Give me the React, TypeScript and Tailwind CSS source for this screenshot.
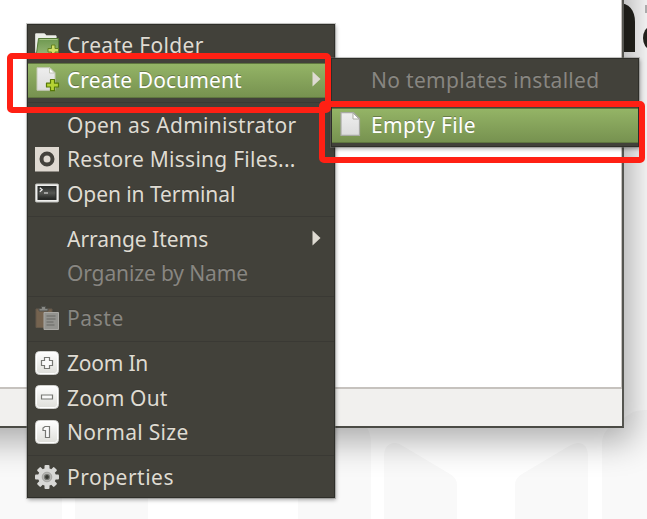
import type { ReactNode } from "react";
import { clsx } from "clsx";

function Icon({ children }: { children: ReactNode }) {
  return (
    <svg viewBox="0 0 24 24" className="-mt-[2px] h-6 w-6 shrink-0 overflow-visible">
      {children}
    </svg>
  );
}

function PlusBadge() {
  return (
    <path
      d="M15.500 12.500h4v3.700h4v3.800h-4v3.700h-4V20h-4v-3.800h4z"
      fill="#b5d334"
      stroke="#577a08"
      strokeWidth="1.2"
      strokeLinejoin="round"
    />
  );
}

function FolderIcon() {
  return (
    <Icon>
      <path d="M.7 19V.9h9l1.800 2h9.700V19z" fill="#f2f2ee" stroke="#c5c6be" />
      <path d="M.5 1v21h2.500V5H21V2.500H11L9.500 .5H.5z" fill="#eceee8" />
      <path d="M3.500 5.500h20v17H1.500v-2z" fill="url(#folder)" stroke="#547936" />
      <path d="M4.500 6.500h18" stroke="#a8c886" />
      <path d="M16.500 12h3.500v3.500h3.500V19H20v3.500h-3.500V19H13v-3.500h3.500z" fill="#d0df65" stroke="#638221" />
    </Icon>
  );
}

function NewDocumentIcon() {
  return (
    <Icon>
      <path d="M2 .7h13l5 5v17.600H2z" fill="url(#paper)" stroke="#c5c9b7" />
      <path d="M14.500 1v5h5z" fill="#fff" stroke="#b8bba9" strokeWidth=".8" />
      <PlusBadge />
    </Icon>
  );
}

function FileIcon() {
  return (
    <Icon>
      <path d="M2 .7h12.500l6 6v16.600H2z" fill="url(#paper)" stroke="#a8aaa4" strokeWidth="1.2" />
      <path d="M14 1v6h6z" fill="#fff" stroke="#aaada3" />
    </Icon>
  );
}

function RestoreIcon() {
  return (
    <Icon>
      <path d="M0 0h24v24.500H0z" fill="#dfd9d1" />
      <circle cx="12" cy="12" r="5.500" fill="none" stroke="#44423c" strokeWidth="4" />
    </Icon>
  );
}

function TerminalIcon() {
  return (
    <Icon>
      <rect x=".5" y="3" width="23" height="18" rx="1" fill="#efefed" stroke="#bbbcb8" />
      <rect x="3" y="5.500" width="18" height="13" fill="url(#screen)" stroke="#292b29" />
      <path d="m4.800 6.800 2.400 2-2.400 2M9 12h4" fill="none" stroke="#eee" strokeWidth="1.2" />
    </Icon>
  );
}

function PasteIcon() {
  return (
    <Icon>
      <path d="M1 3h16v18.500H1z" fill="#75634f" stroke="#65594a" />
      <path d="M4 5V2.500h2.500V.5h4v2H13V5z" fill="#888985" stroke="#50514c" />
      <path d="M9 6.500h14.500v17H9z" fill="#93938f" stroke="#aaa9a5" />
      <path d="M11.500 10h9M11.500 13h9M11.500 16h7M11.500 19h8" stroke="#686965" strokeWidth="1.1" />
    </Icon>
  );
}

function ZoomIcon({ shape }: { shape: string }) {
  return (
    <Icon>
      <rect x=".5" y=".5" width="23" height="23" rx="4" fill="url(#button)" stroke="#d0d0cd" />
      <rect x="1.500" y="1.500" width="21" height="21" rx="3" fill="none" stroke="#fff" />
      <path d={shape} fill="#fafafa" stroke="#777874" strokeWidth="1.2" />
    </Icon>
  );
}

function GearIcon() {
  return (
    <Icon>
      <g fill="#d8d8d6">
        {[0, 45, 90, 135].map((a) => (
          <rect key={a} x="9.500" y="0" width="5" height="24" rx="1" transform={`rotate(${a} 12 12)`} />
        ))}
        <circle cx="12" cy="12" r="9" />
      </g>
      <circle cx="12" cy="12" r="4.800" fill="#b6b6b3" stroke="#a5a5a2" />
      <circle cx="12" cy="12" r="2.500" fill="#373833" stroke="#777874" strokeWidth="1.2" />
    </Icon>
  );
}

type RowProps = {
  label: string;
  tracking: string;
  icon?: ReactNode;
  disabled?: boolean;
  selected?: boolean;
  arrow?: boolean;
};

function Row({ label, tracking, icon, disabled, selected, arrow }: RowProps) {
  return (
    <div
      className={clsx(
        "flex h-[34.5px] shrink-0 items-center whitespace-nowrap pl-[7px] pr-[13px]",
        selected && "border-y border-[#5f763f] bg-linear-to-b from-[#94b466] to-[#779250] text-white",
        !selected && (disabled ? "text-[#888681]" : "text-[#dfdbd2]"),
      )}
    >
      <div className="mr-2 flex w-6 shrink-0">{icon}</div>
      <span className={clsx("-mt-px text-[21px] leading-[30px] [text-shadow:0_-1px_0_#30302b66]", tracking)}>{label}</span>
      {arrow && (
        <svg viewBox="0 0 9 16" className="-mt-[2px] ml-auto h-4 w-[9px] shrink-0">
          <path d="M.5.5v15L8.500 8z" fill="#dfdbd2" />
        </svg>
      )}
    </div>
  );
}

function Separator() {
  return (
    <div className="flex h-[10.5px] shrink-0 items-center">
      <div className="h-px w-full bg-[#3a3934]" />
    </div>
  );
}

const menuClass =
  "absolute flex flex-col border border-[#2e2e29] bg-[#42413a] shadow-[0_0_0_1px_#77777366,1px_2px_4px_#0005]";

export default function App() {
  return (
    <div className="relative h-[519px] w-[647px] overflow-hidden bg-white font-['Noto_Sans','Open_Sans',sans-serif]">
      <svg viewBox="0 0 647 519" className="absolute inset-0 h-full w-full">
        <defs>
          <linearGradient id="folder" x2="0" y2="1">
            <stop stopColor="#6e9850" /><stop offset="1" stopColor="#98b776" />
          </linearGradient>
          <linearGradient id="paper" x2="0" y2="1">
            <stop stopColor="#eeeeee" /><stop offset="1" stopColor="#dcdcdc" />
          </linearGradient>
          <linearGradient id="screen" x2="0" y2="1">
            <stop stopColor="#2b2d2b" /><stop offset=".5" stopColor="#555753" /><stop offset="1" stopColor="#202220" />
          </linearGradient>
          <linearGradient id="button" x2="0" y2="1">
            <stop stopColor="#fff" /><stop offset="1" stopColor="#deded9" />
          </linearGradient>
        </defs>
        <g fill="#f9f9f9">
          <path d="M0 400h62v119H0zM75 400h73v119H75zM298 420h60q13 6 13 24v75h-73z" />
          <path d="M384 519v-62q0-14 11-14 4 0 8 3l47 28q7 4 7 11v34zM515 519v-34q0-7 7-11l47-28q5-3 9-3 10 0 10 14v62zM602 519v-75q0-12 9-18l22-14q5-2 14-2v109z" />
        </g>
        <path d="M618 3c11 0 17 7 17 19v30h-17z" fill="#25241e" />
        <ellipse cx="650" cy="38" rx="7" ry="11" fill="#25241e" />
        <path d="M645 5h2v8h-2z" fill="#b8b8b8" />
      </svg>

      <div className="absolute -left-10 -top-10 flex h-[468px] w-[664px] flex-col border-2 border-[#4b4b45] border-r-[#555550] bg-[#f1f0ee] shadow-[4px_8px_32px_5px_rgba(0,0,0,0.32)]">
        <div className="h-[427px] shrink-0 border-b-2 border-r border-[#c6c2be] bg-white" />
      </div>

      <div className={clsx(menuClass, "left-[27px] top-[24px] h-[474px] w-[308px] pt-[3.5px]")}>
        <Row label="Create Folder" tracking="tracking-[0.32px]" icon={<FolderIcon />} />
        <Row label="Create Document" tracking="tracking-[0.1px]" icon={<NewDocumentIcon />} selected arrow />
        <Separator />
        <Row label="Open as Administrator" tracking="tracking-[0.29px]" />
        <Row label="Restore Missing Files..." tracking="tracking-[0.25px]" icon={<RestoreIcon />} />
        <Row label="Open in Terminal" tracking="tracking-[-0.07px]" icon={<TerminalIcon />} />
        <Separator />
        <Row label="Arrange Items" tracking="tracking-[-0.03px]" arrow />
        <Row label="Organize by Name" tracking="tracking-[-0.13px]" disabled />
        <Separator />
        <Row label="Paste" tracking="tracking-[0.6px]" icon={<PasteIcon />} disabled />
        <Separator />
        <Row label="Zoom In" tracking="tracking-[-0.22px]" icon={<ZoomIcon shape="M9.500 6.500h5v3h3v5h-3v3h-5v-3h-3v-5h3z" />} />
        <Row label="Zoom Out" tracking="tracking-[0.12px]" icon={<ZoomIcon shape="M6.500 10h11v4h-11z" />} />
        <Row label="Normal Size" tracking="tracking-[0.3px]" icon={<ZoomIcon shape="M10 6.500h4.500v11h-4v-7H8V8z" />} />
        <Separator />
        <Row label="Properties" tracking="tracking-[0.5px]" icon={<GearIcon />} />
      </div>

      <div className={clsx(menuClass, "left-[331px] top-[58px] h-[89px] w-[308px] pt-1")}>
        <Row label="No templates installed" tracking="tracking-[0.31px]" disabled />
        <Separator />
        <Row label="Empty File" tracking="tracking-[0.35px]" icon={<FileIcon />} selected />
      </div>

      <div className="absolute left-[7px] top-[53px] h-[60px] w-[324px] rounded-[5px] border-[6px] border-[#ff2014]" />
      <div className="absolute left-[319px] top-[101px] h-[62px] w-[326px] rounded-[5px] border-[6px] border-[#ff2014]" />
    </div>
  );
}
